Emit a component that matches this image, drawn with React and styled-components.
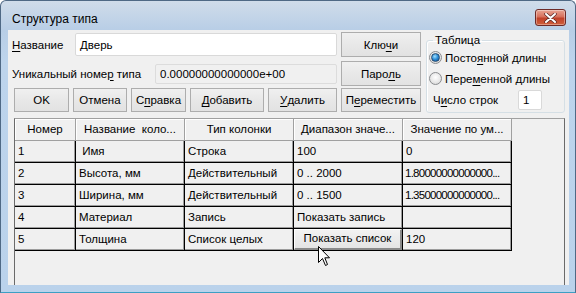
import React from "react";
import styled, { createGlobalStyle } from "styled-components";

const GlobalStyle = createGlobalStyle`
  html, body {
    margin: 0;
    padding: 0;
    background: #ffffff;
  }
  body {
    font-family: "Liberation Sans", Arial, sans-serif;
    font-size: 11.5px;
    color: #000;
  }
`;

const Window = styled.div`
  position: relative;
  width: 576px;
  height: 293px;
  box-sizing: border-box;
  display: flex;
  flex-direction: column;
  border: 1px solid #4f6985;
  border-bottom-color: #3d9fc4;
  border-radius: 6px 6px 0 0;
  background: linear-gradient(180deg, #d0dcea 0px, #b8cee6 29px, #bdd4ec 60px, #bad2eb 100%);
  overflow: hidden;
`;

const TitleBar = styled.div`
  height: 29px;
  flex: none;
  display: flex;
  align-items: flex-start;
  justify-content: space-between;
  padding: 0 9px 0 11px;
`;

const Title = styled.div`
  margin-top: 11px;
  line-height: 14px;
  font-size: 12px;
  color: #000;
`;

const CloseButton = styled.div`
  margin-top: 8px;
  width: 31px;
  height: 17px;
  box-sizing: border-box;
  border: 1px solid #6d2a27;
  border-radius: 3px;
  background: linear-gradient(180deg, #e8a493 0%, #d7705c 45%, #c0412a 55%, #d0603c 100%);
  box-shadow: inset 0 0 0 1px rgba(255, 255, 255, 0.35);
  display: flex;
  align-items: center;
  justify-content: center;
`;

const Client = styled.div`
  flex: 1;
  min-height: 0;
  margin: 0 6px 7px 7px;
  background: #f0f0f0;
  display: flex;
  flex-direction: column;
  padding: 2px 4px 0 4px;
  overflow: hidden;
`;

const Top = styled.div`
  display: flex;
  align-items: flex-start;
`;

const LeftPane = styled.div`
  width: 409px;
  display: flex;
  flex-direction: column;
`;

const FieldRow = styled.div`
  display: flex;
  align-items: center;
  height: 25px;
  margin-top: ${(p) => p.$top || 0}px;
`;

const Label = styled.div`
  width: ${(p) => p.$w}px;
  flex: none;
  white-space: nowrap;
`;

const TextBox = styled.div`
  width: ${(p) => p.$w}px;
  height: ${(p) => p.$h}px;
  box-sizing: border-box;
  border: 1px solid ${(p) => (p.$readonly ? "#dcdcdc" : "#d9d9d9")};
  border-radius: 2px;
  background: ${(p) => (p.$readonly ? "#f0f0f0" : "#ffffff")};
  padding-left: 4px;
  display: flex;
  align-items: center;
  white-space: nowrap;
  overflow: hidden;
  flex: none;
`;

const Button = styled.div`
  width: ${(p) => p.$w}px;
  height: ${(p) => p.$h || 25}px;
  margin-left: ${(p) => p.$ml || 0}px;
  box-sizing: border-box;
  border: 1px solid #adadad;
  background: linear-gradient(180deg, #f0f0f0 0%, #e8e8e8 50%, #e2e2e2 100%);
  display: flex;
  align-items: center;
  justify-content: center;
  white-space: nowrap;
  flex: none;
`;

const ButtonRow = styled.div`
  display: flex;
  gap: 4px;
  margin-top: 2px;
  padding-left: 2px;
`;

const Group = styled.fieldset`
  margin: 2px 0 0 5px;
  width: 139px;
  height: 79px;
  box-sizing: border-box;
  padding: 0 0 0 2px;
  border: 1px solid #d5dfe5;
  border-radius: 3px;
  box-shadow: inset 1px 1px 0 #fff;
  display: flex;
  flex-direction: column;
`;

const Legend = styled.legend`
  padding: 0 2px;
  margin-left: 4px;
  line-height: 13px;
`;

const RadioRow = styled.div`
  display: flex;
  align-items: center;
  height: 21px;
  gap: 3px;
`;

const RadioDot = styled.span`
  width: 13px;
  height: 13px;
  box-sizing: border-box;
  border-radius: 50%;
  border: 1px solid #8a8c8f;
  background: radial-gradient(circle at 50% 40%, #ffffff 0%, #e8e8e8 55%, #cfcfcf 100%);
  display: flex;
  align-items: center;
  justify-content: center;
  &::after {
    content: "";
    display: ${(p) => (p.$checked ? "block" : "none")};
    width: 7px;
    height: 7px;
    border-radius: 50%;
    background: radial-gradient(circle at 40% 35%, #9ee0ff 0%, #2a8ad4 50%, #114d8c 100%);
    border: 0.5px solid #274a6e;
  }
`;

const CountRow = styled.div`
  display: flex;
  align-items: center;
  height: 22px;
  padding-left: 4px;
`;

const Grid = styled.div`
  flex: 1;
  margin: 5px 0 0 2px;
  border-left: 1px solid #6a6a6a;
  border-top: 1px solid #a0a0a0;
  border-right: 1px solid #6a6a6a;
  display: grid;
  grid-template-columns: 61px repeat(4, 109px);
  grid-auto-rows: 22px;
  align-content: start;
`;

const HeadCell = styled.div`
  box-sizing: border-box;
  border-right: 1px solid #a0a0a0;
  border-bottom: 1px solid #a0a0a0;
  box-shadow: inset 1px 1px 0 #ffffff;
  text-align: center;
  line-height: 21px;
  white-space: pre;
  overflow: hidden;
`;

const Cell = styled.div`
  box-sizing: border-box;
  border-right: 1px solid #000;
  border-bottom: 1px solid #000;
  box-shadow: inset -1px -1px 0 rgba(0, 0, 0, 0.35);
  padding-left: ${(p) => (p.$tight ? 2 : 3)}px;
  line-height: 21px;
  letter-spacing: ${(p) => (p.$tight ? "-0.75px" : "normal")};
  white-space: pre;
  overflow: hidden;
`;

const CellButton = styled.div`
  height: 100%;
  margin-left: -3px;
  box-sizing: border-box;
  border-top: 1px solid #ffffff;
  border-left: 1px solid #ffffff;
  border-right: 2px solid #8a8a8a;
  border-bottom: 2px solid #8a8a8a;
  background: linear-gradient(180deg, #f2f2f2, #e4e4e4);
  display: flex;
  align-items: center;
  justify-content: center;
  line-height: 1;
`;

const Cursor = styled.svg`
  position: absolute;
  left: 317px;
  top: 245px;
`;

const U = styled.span`
  text-decoration: underline;
  text-underline-offset: 2px;
`;

const headers = ["Номер", "Название  коло...", "Тип колонки", "Диапазон значе...", "Значение по ум..."];

const rows = [
  ["1", "\u00a0Имя", "Строка", "100", "0"],
  ["2", "Высота, мм", "Действительный", "0 .. 2000", "1.80000000000000..."],
  ["3", "Ширина, мм", "Действительный", "0 .. 1500", "1.35000000000000..."],
  ["4", "Материал", "Запись", "Показать запись", ""],
  ["5", "Толщина", "Список целых", { button: "Показать список" }, "120"],
];

export default function App() {
  return (
    <>
      <GlobalStyle />
      <Window>
        <TitleBar>
          <Title>Структура типа</Title>
          <CloseButton>
            <svg width="13" height="10" viewBox="0 0 13 10">
              <path
                d="M2 1 L11 9 M11 1 L2 9"
                stroke="#5a2a28"
                strokeWidth="3.4"
                strokeLinecap="round"
              />
              <path
                d="M2 1 L11 9 M11 1 L2 9"
                stroke="#ffffff"
                strokeWidth="2"
                strokeLinecap="round"
              />
            </svg>
          </CloseButton>
        </TitleBar>
        <Client>
          <Top>
            <LeftPane>
              <FieldRow>
                <Label $w={63}>
                  <U>Н</U>азвание
                </Label>
                <TextBox $w={262} $h={23}>Дверь</TextBox>
                <Button $w={80} $ml={4}>
                  Клю<U>ч</U>и
                </Button>
              </FieldRow>
              <FieldRow $top={4}>
                <Label $w={143}>
                  Уникальный номе<U>р</U> типа
                </Label>
                <TextBox $w={182} $h={20} $readonly>
                  0.00000000000000e+00
                </TextBox>
                <Button $w={80} $ml={4}>
                  Паро<U>л</U>ь
                </Button>
              </FieldRow>
              <ButtonRow>
                <Button $w={55} $h={24}>OK</Button>
                <Button $w={54} $h={24}>Отмена</Button>
                <Button $w={55} $h={24}>
                  С<U>п</U>равка
                </Button>
                <Button $w={74} $h={24}>
                  <U>Д</U>обавить
                </Button>
                <Button $w={69} $h={24}>
                  <U>У</U>далить
                </Button>
                <Button $w={80} $h={24}>
                  П<U>е</U>реместить
                </Button>
              </ButtonRow>
            </LeftPane>
            <Group>
              <Legend>Таблица</Legend>
              <RadioRow>
                <RadioDot $checked />
                <span>
                  Посто<U>я</U>нной длины
                </span>
              </RadioRow>
              <RadioRow>
                <RadioDot />
                <span>
                  Пере<U>м</U>енной длины
                </span>
              </RadioRow>
              <CountRow>
                <Label $w={85}>
                  Ч<U>и</U>сло строк
                </Label>
                <TextBox $w={24} $h={20}>1</TextBox>
              </CountRow>
            </Group>
          </Top>
          <Grid>
            {headers.map((h) => (
              <HeadCell key={h}>{h}</HeadCell>
            ))}
            {rows.map((r, i) =>
              r.map((c, j) => (
                <Cell key={i + "-" + j} $tight={typeof c === "string" && c.length > 16}>
                  {typeof c === "object" ? <CellButton>{c.button}</CellButton> : c}
                </Cell>
              ))
            )}
          </Grid>
        </Client>
        <Cursor width="13" height="21" viewBox="0 0 13 21">
          <path
            d="M0.5 0.5 L0.5 16.5 L4.5 12.5 L7.5 19.5 L9.5 18.5 L6.8 11.8 L11.5 11.8 Z"
            fill="#ffffff"
            stroke="#000000"
            strokeWidth="1"
          />
        </Cursor>
      </Window>
    </>
  );
}
